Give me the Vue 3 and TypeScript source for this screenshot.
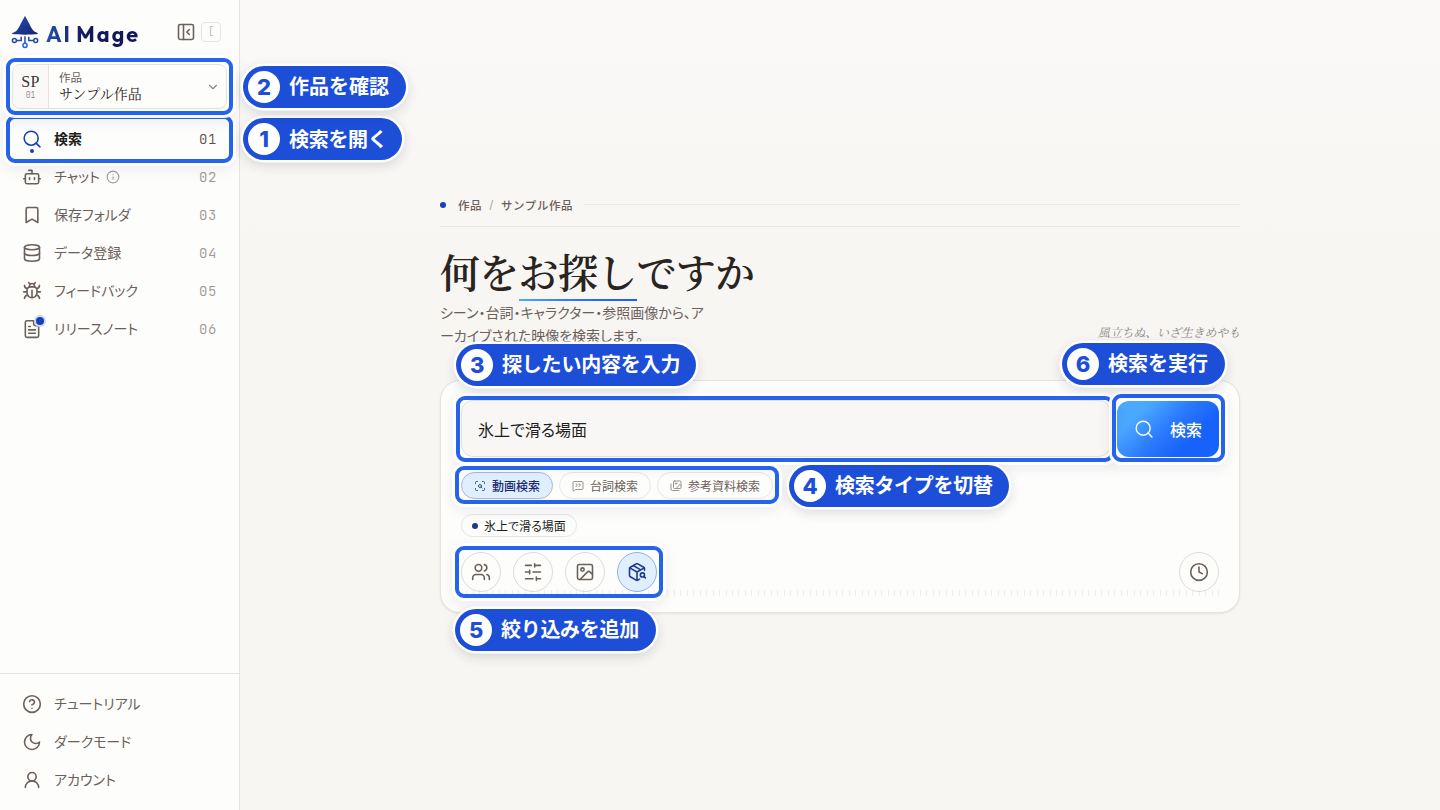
<script setup lang="ts">
interface NavItem {
  label: string
  icon: string
  num?: string
  active?: boolean
  info?: boolean
  dot?: boolean
}

const icons: Record<string, string> = {
  search: '<circle cx="11" cy="11" r="8.4"/><path d="m21.5 21.5-4.6-4.6"/>',
  bot: '<path d="M12 8V4H8"/><rect width="16" height="12" x="4" y="8" rx="2"/><path d="M2 14h2M20 14h2M15 13v2M9 13v2"/>',
  bookmark: '<path d="m19 21-7-4-7 4V5a2 2 0 0 1 2-2h10a2 2 0 0 1 2 2v16z"/>',
  database: '<ellipse cx="12" cy="5" rx="9" ry="3"/><path d="M3 5v14a9 3 0 0 0 18 0V5"/><path d="M3 12a9 3 0 0 0 18 0"/>',
  bug: '<path d="m8 2 1.88 1.88M14.12 3.88 16 2M9 7.13v-1a3.003 3.003 0 1 1 6 0v1"/><path d="M12 20c-3.3 0-6-2.7-6-6v-3a4 4 0 0 1 4-4h4a4 4 0 0 1 4 4v3c0 3.3-2.7 6-6 6M12 20v-9"/><path d="M6.53 9C4.6 8.8 3 7.1 3 5M6 13H2M3 21c0-2.1 1.7-3.9 3.8-4M20.97 5c0 2.1-1.6 3.8-3.5 4M22 13h-4M17.2 17c2.1.1 3.8 1.9 3.8 4"/>',
  file: '<path d="M15 2H6a2 2 0 0 0-2 2v16a2 2 0 0 0 2 2h12a2 2 0 0 0 2-2V7Z"/><path d="M14 2v4a2 2 0 0 0 2 2h4M10 9H8M16 13H8M16 17H8"/>',
  help: '<circle cx="12" cy="12" r="10"/><path d="M9.09 9a3 3 0 0 1 5.83 1c0 2-3 3-3 3M12 17h.01"/>',
  moon: '<path d="M12 3a6 6 0 0 0 9 9 9 9 0 1 1-9-9Z"/>',
  user: '<circle cx="12" cy="8" r="5"/><path d="M20 21a8 8 0 0 0-16 0"/>',
  info: '<circle cx="12" cy="12" r="10"/><path d="M12 16v-4M12 8h.01"/>',
  panel: '<rect width="18" height="18" x="3" y="3" rx="2"/><path d="M9 3v18m7-6-3-3 3-3"/>',
  chevron: '<path d="m6 9 6 6 6-6"/>',
  scan: '<path d="M3 7V5a2 2 0 0 1 2-2h2M17 3h2a2 2 0 0 1 2 2v2M21 17v2a2 2 0 0 1-2 2h-2M7 21H5a2 2 0 0 1-2-2v-2"/><circle cx="12" cy="12" r="3"/><path d="m16 16-1.9-1.9"/>',
  quote: '<path d="M22 17a2 2 0 0 1-2 2H6.8l-2.6 2.4A1.3 1.3 0 0 1 2 20.5V5a2 2 0 0 1 2-2h16a2 2 0 0 1 2 2z"/><path d="M14 13a2 2 0 0 0 2-2V8h-2M8 13a2 2 0 0 0 2-2V8H8"/>',
  images: '<rect x="7" y="2" width="15" height="15" rx="2"/><path d="M18 21H5a3 3 0 0 1-3-3V8"/><circle cx="12" cy="7" r="1.5"/><path d="m22 11-2-2-8 8"/>',
  users: '<path d="M16 21v-2a4 4 0 0 0-4-4H6a4 4 0 0 0-4 4v2"/><circle cx="9" cy="7" r="4"/><path d="M22 21v-2a4 4 0 0 0-3-3.87M16 3.13a4 4 0 0 1 0 7.75"/>',
  sliders: '<path d="M21 4h-7M10 4H3M21 12h-9M8 12H3M21 20h-5M12 20H3M14 2v4M8 10v4M16 18v4"/>',
  image: '<rect width="18" height="18" x="3" y="3" rx="2"/><circle cx="9" cy="9" r="2"/><path d="m21 15-3.086-3.086a2 2 0 0 0-2.828 0L6 21"/>',
  package: '<path d="M21 10V8a2 2 0 0 0-1-1.73l-7-4a2 2 0 0 0-2 0l-7 4A2 2 0 0 0 3 8v8a2 2 0 0 0 1 1.73l7 4a2 2 0 0 0 2 0l2-1.14"/><path d="m7.5 4.27 9 5.15M3.29 7 12 12l8.71-5M12 22V12"/><circle cx="18.5" cy="15.5" r="2.5"/><path d="M20.27 17.27 22 19"/>',
  clock: '<circle cx="12" cy="12" r="10"/><path d="M12 6v6l4 2"/>',
}

const nav: NavItem[] = [
  { label: '検索', icon: 'search', num: '01', active: true },
  { label: 'チャット', icon: 'bot', num: '02', info: true },
  { label: '保存フォルダ', icon: 'bookmark', num: '03' },
  { label: 'データ登録', icon: 'database', num: '04' },
  { label: 'フィードバック', icon: 'bug', num: '05' },
  { label: 'リリースノート', icon: 'file', num: '06', dot: true },
]

const footer: NavItem[] = [
  { label: 'チュートリアル', icon: 'help' },
  { label: 'ダークモード', icon: 'moon' },
  { label: 'アカウント', icon: 'user' },
]

const tabs = [
  { label: '動画検索', icon: 'scan', on: true },
  { label: '台詞検索', icon: 'quote', on: false },
  { label: '参考資料検索', icon: 'images', on: false },
]

const filters = [
  { icon: 'users', on: false },
  { icon: 'sliders', on: false },
  { icon: 'image', on: false },
  { icon: 'package', on: true },
]

const steps = [
  { n: 1, text: '検索を開く' },
  { n: 2, text: '作品を確認' },
  { n: 3, text: '探したい内容を入力' },
  { n: 4, text: '検索タイプを切替' },
  { n: 5, text: '絞り込みを追加' },
  { n: 6, text: '検索を実行' },
]
</script>

<template>
  <div class="app">
    <aside class="sidebar">
      <div class="brand">
        <svg class="logo" viewBox="0 0 28 34">
          <defs>
            <linearGradient id="hat" x1="0" y1="0" x2="1" y2="1">
              <stop offset="0" stop-color="#2450b8" />
              <stop offset="1" stop-color="#14226e" />
            </linearGradient>
          </defs>
          <path d="M14 .8c1 2.200 2.600 4.700 4 7.500 1.400 2.700 2.600 5.200 4.200 7.300 1.300 1.300 4.400 2 5 3.500-4.400.5-8.500.6-13.200.6S5.200 19.600.8 19.100c.6-1.500 3.700-2.200 5-3.500 1.600-2.100 2.800-4.600 4.200-7.300 1.400-2.800 3-5.300 4-7.500Z" fill="url(#hat)" />
          <g fill="none" stroke="#2347a8" stroke-width="1.500">
            <path d="M14 21.200v7M5.500 25.500h4.700V21.700M22.500 25.500h-4.700V21.700" />
            <circle cx="3.400" cy="25.500" r="2" /><circle cx="24.700" cy="25.500" r="2" />
            <circle cx="14" cy="30.300" r="2.100" stroke="#2563eb" />
          </g>
        </svg>
        <span class="wordmark">AI Mage</span>
        <svg class="ic panel" viewBox="0 0 24 24" v-html="icons.panel" />
        <kbd>[</kbd>
      </div>

      <div class="project">
        <div class="code"><b>SP</b><small>01</small></div>
        <div class="pname"><span>作品</span><strong>サンプル作品</strong></div>
        <svg class="ic chev" viewBox="0 0 24 24" v-html="icons.chevron" />
      </div>

      <nav>
        <div v-for="item in nav" :key="item.label" class="row" :class="{ active: item.active }">
          <span class="icon-wrap">
            <svg class="ic" viewBox="0 0 24 24" v-html="icons[item.icon]" />
            <i v-if="item.dot" class="badge" />
            <i v-if="item.active" class="here" />
          </span>
          <span class="label">{{ item.label }}</span>
          <svg v-if="item.info" class="ic info" viewBox="0 0 24 24" v-html="icons.info" />
          <span class="num">{{ item.num }}</span>
        </div>
      </nav>

      <div class="foot">
        <div v-for="item in footer" :key="item.label" class="row">
          <span class="icon-wrap"><svg class="ic" viewBox="0 0 24 24" v-html="icons[item.icon]" /></span>
          <span class="label">{{ item.label }}</span>
        </div>
      </div>
    </aside>

    <main>
      <div class="crumbs">
        <i class="bullet" /><span>作品</span><em>/</em><span>サンプル作品</span><i class="rule" />
      </div>
      <h1>何を<span>お探し</span>ですか</h1>
      <div class="lead">
        <p>シーン・台詞・キャラクター・参照画像から、ア<br>ーカイブされた映像を検索します。</p>
        <q>風立ちぬ、いざ生きめやも</q>
      </div>

      <section class="card">
        <div class="query">
          <div class="field">氷上で滑る場面</div>
          <button><svg class="ic" viewBox="0 0 24 24" v-html="icons.search" /><span>検索</span></button>
        </div>
        <div class="tabs">
          <div v-for="t in tabs" :key="t.label" class="tab" :class="{ on: t.on }">
            <svg class="ic" viewBox="0 0 24 24" v-html="icons[t.icon]" /><span>{{ t.label }}</span>
          </div>
        </div>
        <div class="chip"><i /><span>氷上で滑る場面</span></div>
        <div class="tools">
          <div v-for="f in filters" :key="f.icon" class="round" :class="{ on: f.on }">
            <svg class="ic" viewBox="0 0 24 24" v-html="icons[f.icon]" />
          </div>
          <div class="round history"><svg class="ic" viewBox="0 0 24 24" v-html="icons.clock" /></div>
        </div>
        <div class="ticks" />
      </section>
    </main>

    <div v-for="s in steps" :key="'f' + s.n" class="frame" :class="'f' + s.n" />
    <div v-for="s in steps" :key="'p' + s.n" class="pill" :class="'p' + s.n">
      <b>{{ s.n }}</b><span>{{ s.text }}</span>
    </div>
  </div>
</template>

<style>
body { background: #f7f6f3; overflow: hidden; }
</style>

<style scoped>
.app {
  position: relative;
  display: flex;
  width: 1440px;
  height: 810px;
  overflow: hidden;
  background: linear-gradient(#faf9f7, #f7f6f3 35%);
  color: #6b605a;
  font-family: Inter, "Noto Sans CJK JP", sans-serif;
  font-feature-settings: "palt";
}
* { box-sizing: border-box; }
.ic {
  width: 20px;
  height: 20px;
  flex: none;
  display: block;
  fill: none;
  stroke: currentColor;
  stroke-width: 1.9;
  stroke-linecap: round;
  stroke-linejoin: round;
}

.sidebar {
  width: 240px;
  height: 810px;
  flex: none;
  display: flex;
  flex-direction: column;
  background: #fdfdfc;
  border-right: 1px solid #e6e4e1;
}
.brand { display: flex; align-items: center; height: 64px; padding-left: 11px; }
.logo { width: 28px; height: 34px; flex: none; }
.wordmark {
  width: 97px;
  margin: 3px 0 0 7px;
  font: 700 21.500px/28px Outfit, Urbanist, Inter, sans-serif;
  letter-spacing: 2.100px;
  word-spacing: -2px;
  white-space: nowrap;
  background: linear-gradient(90deg, #2450a8, #121a5c 40%, #10165a);
  background-clip: text;
  color: transparent;
}
.panel { width: 20px; height: 20px; margin-left: 33px; }
kbd {
  width: 20px;
  height: 20px;
  margin-left: 5px;
  border: 1px solid #e6e4e1;
  border-radius: 4px;
  color: #c0bbb6;
  font: 10px/17px "JetBrains Mono", "Liberation Mono", monospace;
  text-align: center;
}
.project {
  display: flex;
  align-items: center;
  width: 215px;
  height: 45px;
  flex: none;
  margin: 0 0 0 12px;
  border: 1px solid #e4e2df;
  border-radius: 8px;
  overflow: hidden;
}
.code {
  width: 36px;
  height: 100%;
  flex: none;
  display: flex;
  flex-direction: column;
  align-items: center;
  padding-top: 8px;
  border-right: 1px solid #e6e4e1;
  background: #faf9f8;
}
.code b { font: 400 16px/17px "Liberation Serif", serif; color: #3a3430; letter-spacing: .3px; }
.code small { font: 300 8px/11px "JetBrains Mono", "Liberation Mono", monospace; color: #8f8882; }
.pname { display: flex; flex-direction: column; margin-left: 10px; flex: 1; }
.pname span { font-size: 11.500px; line-height: 14px; }
.pname strong {
  font: 400 14px/17px "Noto Serif CJK JP", "Noto Sans CJK JP", serif;
  color: #2a2522;
}
.chev { width: 14px; height: 14px; margin-right: 6px; color: #8b847e; }

nav { padding-top: 11px; }
.row { display: flex; align-items: center; height: 38px; padding: 0 22px; }
.icon-wrap { position: relative; margin-right: 12px; }
.label { font-size: 14px; line-height: 20px; white-space: nowrap; }
.num { margin-left: auto; font: 300 14px/20px "JetBrains Mono", "Liberation Mono", monospace; color: #9d9792; letter-spacing: .6px; }
.info { width: 14px; height: 14px; margin-left: 6px; color: #a39d98; }
.active .ic { color: #1740b8; }
.active .label { color: #221d1a; font-weight: 600; }
.active .num { color: #5b514b; }
.badge {
  position: absolute;
  top: -2px;
  right: -2px;
  width: 8px;
  height: 8px;
  border-radius: 50%;
  background: #1740b8;
  box-shadow: 0 0 0 2px #cbdcf2;
}
.here {
  position: absolute;
  left: 8px;
  bottom: -4px;
  width: 4px;
  height: 4px;
  border-radius: 50%;
  background: #1740b8;
}
.foot { margin-top: auto; height: 137px; border-top: 1px solid #e6e4e1; padding-top: 11px; }

main { width: 800px; margin: 0 auto; padding-top: 194px; }
.crumbs {
  display: flex;
  align-items: center;
  height: 33px;
  padding-bottom: 11px;
  border-bottom: 1px solid #e6e4e0;
  font-size: 11.500px;
  font-weight: 500;
  font-feature-settings: normal;
  letter-spacing: .6px;
}
.bullet { width: 6px; height: 6px; border-radius: 50%; background: #1740b8; margin-right: 12px; }
.crumbs em { margin: 0 7px; font-style: normal; font-weight: 400; color: #aaa5a0; }
.rule { flex: 1; height: 1px; margin-left: 11px; background: #ebe9e5; }
h1 {
  height: 57px;
  margin: 17px 0 0;
  font: 600 40px/54px "Noto Serif CJK JP", "Noto Sans CJK JP", serif;
  font-feature-settings: normal;
  letter-spacing: -.7px;
  color: #2a2420;
}
h1 span {
  display: inline-block;
  padding-bottom: 3px;
  background: linear-gradient(90deg, #4aa8ff, #2a72fb 50%, #1a5cf8) 0 100% / 100% 2px no-repeat;
}
.lead { display: flex; justify-content: space-between; height: 79px; }
.lead p { margin: 0; font-size: 14px; line-height: 23px; white-space: nowrap; }
.lead q {
  quotes: none;
  margin-top: 22px;
  font: italic 12px/18px "Noto Serif CJK JP", "Noto Sans CJK JP", serif;
  letter-spacing: -.15px;
  color: #8d8680;
  white-space: nowrap;
}
.card {
  height: 233px;
  padding: 19px 20px 0;
  border: 1px solid #e5e3e0;
  border-radius: 20px;
  background: #fdfdfc;
  box-shadow: 0 1px 2px rgba(40, 30, 20, .08);
}
.query { display: flex; align-items: flex-start; justify-content: space-between; height: 57px; }
.field {
  width: 650px;
  height: 57px;
  padding-left: 16px;
  border: 1px solid #e2e0dd;
  border-radius: 12px;
  background: #f8f7f5;
  color: #221d1a;
  font-size: 16px;
  line-height: 59px;
}
button {
  display: flex;
  align-items: center;
  width: 102px;
  height: 56px;
  margin-top: 1px;
  padding: 0 0 0 17px;
  border: 0;
  border-radius: 12px;
  background: linear-gradient(135deg, #4aa8ff 22%, #2a78fc 50%, #1762fa 72%);
  color: #fff;
  font: 500 16px/24px "Noto Sans CJK JP", sans-serif;
}
button span { margin-left: 16px; }
button .ic { stroke-width: 1.700; }
.tabs { display: flex; gap: 6px; margin-top: 15px; }
.tab {
  display: flex;
  align-items: center;
  height: 27px;
  padding: 0 12px;
  border: 1px solid #e8e6e3;
  border-radius: 14px;
  font-size: 12px;
  white-space: nowrap;
}
.tab .ic { width: 12px; height: 12px; margin-right: 6px; color: #958e88; }
.tab.on .ic { color: #33508f; }
.tab.on { background: #e0effe; border-color: #a5b8d8; color: #1a2a72; font-weight: 500; }
.chip {
  display: flex;
  align-items: center;
  width: 116px;
  height: 23px;
  margin-top: 15px;
  padding-left: 10px;
  border: 1px solid #e8e6e3;
  border-radius: 12px;
  color: #221d1a;
  font-size: 12px;
  white-space: nowrap;
}
.chip i { width: 6px; height: 6px; margin-right: 6px; border-radius: 50%; background: #1e3a8a; }
.tools { display: flex; gap: 12px; margin-top: 15px; }
.round {
  display: flex;
  align-items: center;
  justify-content: center;
  width: 40px;
  height: 40px;
  border: 1px solid #dedcd9;
  border-radius: 50%;
}
.round.on { background: #e0effe; border-color: #8fb0ee; color: #1e3a8a; }
.history { margin-left: auto; }
.ticks {
  height: 6px;
  margin-top: -2px;
  background: repeating-linear-gradient(270deg, #efedea 0 1px, transparent 1px 6.480px);
}

.frame {
  position: absolute;
  border: 4px solid #2563eb;
  border-radius: 9px;
  box-shadow: 0 0 0 3px rgba(255, 255, 255, .95), 0 4px 14px 3px rgba(30, 30, 60, .07);
}
.f1 { left: 6px; top: 115px; width: 227px; height: 48px; }
.f2 { left: 6px; top: 58px; width: 227px; height: 57px; z-index: 1; }
.f3 { left: 456px; top: 395.500px; width: 658px; height: 66px; }
.f4 { left: 455px; top: 466px; width: 324px; height: 38px; }
.f5 { left: 455px; top: 546px; width: 208px; height: 52px; }
.f6 { left: 1112px; top: 394px; width: 113px; height: 68px; }
.pill {
  position: absolute;
  z-index: 2;
  display: flex;
  align-items: center;
  height: 42px;
  padding-left: 5px;
  border-radius: 21px;
  background: #1d4ed8;
  box-shadow: 0 0 0 2.500px #fff, 0 4px 12px 2px rgba(30, 30, 60, .14);
  color: #fff;
  white-space: nowrap;
}
.pill b {
  width: 32px;
  height: 32px;
  margin-right: 9px;
  border-radius: 50%;
  background: #fff;
  color: #1d4ed8;
  font: 800 22px/32px Inter, sans-serif;
  text-align: center;
}
.pill span { padding-bottom: 1px; font: 700 20px/30px "Noto Sans CJK JP", sans-serif; }
.p1 { left: 243px; top: 118px; width: 159px; letter-spacing: -.3px; }
.p2 { left: 243px; top: 65.500px; width: 163px; }
.p3 { left: 456px; top: 343.500px; width: 240px; letter-spacing: -.2px; }
.p4 { left: 789px; top: 464.500px; width: 220px; letter-spacing: -.3px; }
.p5 { left: 455px; top: 608.500px; width: 201px; letter-spacing: -.3px; }
.p6 { left: 1062px; top: 342.500px; width: 163px; }
</style>
